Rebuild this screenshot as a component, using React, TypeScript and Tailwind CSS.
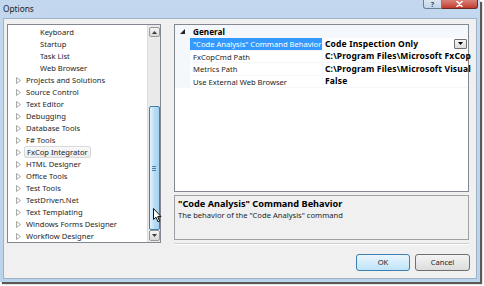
import React from 'react';

const treeItems: { label: string; child?: boolean; selected?: boolean }[] = [
  { label: 'Keyboard', child: true },
  { label: 'Startup', child: true },
  { label: 'Task List', child: true },
  { label: 'Web Browser', child: true },
  { label: 'Projects and Solutions' },
  { label: 'Source Control' },
  { label: 'Text Editor' },
  { label: 'Debugging' },
  { label: 'Database Tools' },
  { label: 'F# Tools' },
  { label: 'FxCop Integrator', selected: true },
  { label: 'HTML Designer' },
  { label: 'Office Tools' },
  { label: 'Test Tools' },
  { label: 'TestDriven.Net' },
  { label: 'Text Templating' },
  { label: 'Windows Forms Designer' },
  { label: 'Workflow Designer' },
];

const properties = [
  { name: '"Code Analysis" Command Behavior', value: 'Code Inspection Only', selected: true },
  { name: 'FxCopCmd Path', value: 'C:\\Program Files\\Microsoft FxCop' },
  { name: 'Metrics Path', value: 'C:\\Program Files\\Microsoft Visual' },
  { name: 'Use External Web Browser', value: 'False' },
];

function ExpandArrow() {
  return (
    <svg width="5" height="7" viewBox="0 0 5 7" className="shrink-0">
      <path d="M0.5 0.5 L4.5 3.5 L0.5 6.5 Z" fill="white" stroke="#a6a6a6" strokeWidth="1" />
    </svg>
  );
}

function TreePanel() {
  return (
    <div className="w-[154px] h-[219px] border border-[#828790] bg-white flex relative">
      <div className="flex-1 pt-[1px] overflow-hidden">
        {treeItems.map((item) => (
          <div key={item.label} className="h-[12px] flex items-center">
            {item.child ? (
              <div className="w-[32px] shrink-0" />
            ) : (
              <div className="w-[18px] shrink-0 flex justify-end pr-[5px] pl-[8px]">
                <ExpandArrow />
              </div>
            )}
            <span
              className={
                item.selected
                  ? 'px-[2px] -ml-[2px] h-[12px] leading-[11px] border border-[#d9d9d9] rounded-[2px] bg-gradient-to-b from-[#fafafa] to-[#ebebeb] text-[#1e1e1e]'
                  : 'text-[#1e1e1e] leading-[12px]'
              }
            >
              {item.label}
            </span>
          </div>
        ))}
      </div>
      {/* vertical scrollbar */}
      <div className="w-[13px] bg-[#eaeaea] border-l border-[#dcdcdc] flex flex-col items-center pt-[2px] pb-[1px]">
        <div className="w-[11px] h-[10px] border border-[#9a9a9a] rounded-[2px] bg-gradient-to-b from-[#f5f5f5] to-[#d8d8d8] flex items-center justify-center">
          <svg width="5" height="3" viewBox="0 0 5 3">
            <path d="M0 3 L2.5 0 L5 3 Z" fill="#3a3a3a" />
          </svg>
        </div>
        <div className="flex-1" />
        <div className="w-[11px] h-[124px] border border-[#3c7fb1] rounded-[2px] bg-gradient-to-r from-[#e3f3fd] via-[#b7dcf5] to-[#a5d2f1] flex items-center justify-center">
          <div className="flex flex-col gap-[1px]">
            <div className="w-[4px] h-px bg-[#4a7fa8]" />
            <div className="w-[4px] h-px bg-[#4a7fa8]" />
            <div className="w-[4px] h-px bg-[#4a7fa8]" />
          </div>
        </div>
        <div className="w-[11px] h-[11px] border border-[#9a9a9a] rounded-[2px] bg-gradient-to-b from-[#f5f5f5] to-[#d8d8d8] flex items-center justify-center">
          <svg width="5" height="3" viewBox="0 0 5 3">
            <path d="M0 0 L2.5 3 L5 0 Z" fill="#3a3a3a" />
          </svg>
        </div>
      </div>
      {/* mouse pointer */}
      <svg className="absolute left-[145px] top-[183px]" width="9" height="15" viewBox="0 0 9 15">
        <path d="M0.5 0.5 L0.5 11.5 L3 9.2 L5 13.8 L6.6 13.1 L4.7 8.6 L8 8.6 Z" fill="white" stroke="#111" strokeWidth="1" strokeLinejoin="round" />
      </svg>
    </div>
  );
}

function PropertyGrid() {
  return (
    <div className="h-[168px] border border-[#828790] bg-white flex flex-col">
      <div className="h-[13px] flex bg-[#f4f7fc]">
        <div className="w-[15px] flex items-center justify-center">
          <svg width="5" height="5" viewBox="0 0 5 5">
            <path d="M5 0 L5 5 L0 5 Z" fill="#262626" />
          </svg>
        </div>
        <span className="pl-[3px] font-bold text-[8.2px] leading-[13px] text-black">General</span>
      </div>
      {properties.map((p) => (
        <div key={p.name} className="h-[12.5px] flex border-b border-[#f4f7fc]">
          <div className="w-[15px] bg-[#f4f7fc] shrink-0" />
          <div
            className={`w-[133px] shrink-0 pl-[3px] border-r border-[#f4f7fc] whitespace-nowrap overflow-hidden leading-[12px] ${
              p.selected ? 'bg-[#3399ff] text-white' : 'text-[#1e1e1e]'
            }`}
          >
            {p.name}
          </div>
          <div className="flex-1 min-w-0 pl-[2px] pr-[1px] flex items-center font-bold text-[8.5px] text-black">
            <span className="flex-1 whitespace-nowrap leading-[12px] tracking-[0.15px]">{p.value}</span>
            {p.selected && (
              <div className="w-[13px] h-[10px] border border-[#707070] rounded-[1px] bg-gradient-to-b from-[#f6f6f6] to-[#dcdcdc] flex items-center justify-center">
                <svg width="5" height="3" viewBox="0 0 5 3">
                  <path d="M0 0 L2.5 3 L5 0 Z" fill="#000" />
                </svg>
              </div>
            )}
          </div>
        </div>
      ))}
    </div>
  );
}

export default function App() {
  return (
    <div
      className="w-[484px] h-[286px] bg-white overflow-hidden text-[7.6px]"
      style={{ fontFamily: '"Noto Sans", "Open Sans", sans-serif' }}
    >
      <div className="w-[480px] h-[282px] bg-gradient-to-b from-[#c3d8ef] to-[#bcd3ec] flex flex-col shadow-[2px_2px_1px_rgba(0,0,0,0.65)]">
        {/* title bar */}
        <div className="h-[18px] flex items-start">
          <span className="pl-[3px] pt-[3px] text-[8.3px] text-[#1c1c1c]">Options</span>
          <div className="flex-1" />
          <div className="flex mr-[2px]">
            <div className="w-[19px] h-[9px] border border-t-0 border-[#6d7f94] rounded-bl-[3px] bg-gradient-to-b from-[#dbe6f3] to-[#c3d4e8] flex items-center justify-center text-[7px] leading-none text-[#3b4a5c] font-bold">
              ?
            </div>
            <div className="w-[36px] h-[9px] border border-t-0 border-l-0 border-[#6b2a22] rounded-br-[3px] bg-gradient-to-b from-[#d8817a] to-[#c2392e] flex items-center justify-center">
              <svg width="7" height="6" viewBox="0 0 7 6">
                <path d="M1 0.5 L6 5.5 M6 0.5 L1 5.5" stroke="white" strokeWidth="1.6" strokeLinecap="round" />
              </svg>
            </div>
          </div>
        </div>
        {/* client area */}
        <div className="flex-1 mx-[3px] mb-[3px] bg-[#f0f0f0] border border-[#9db1c8] flex flex-col">
          <div className="flex pl-[3px] pt-[5px] gap-[13px]">
            <TreePanel />
            <div className="w-[295px] flex flex-col">
              <PropertyGrid />
              <div className="mt-[3px] h-[45px] border border-[#a0a0a0] bg-[#f0f0f0] px-[3px] pt-[2px] text-[#1e1e1e]">
                <div className="font-bold text-[9.2px] leading-[12px] text-black">"Code Analysis" Command Behavior</div>
                <div className="leading-[11px]">The behavior of the "Code Analysis" command</div>
              </div>
              <div className="mt-[3px] h-[2px] border-t border-[#d0d0d0] border-b border-b-white" />
            </div>
          </div>
          <div className="flex justify-end gap-[5px] pr-[6px] mt-[9px]">
            <button className="w-[54px] h-[17px] border border-[#3c7fb1] rounded-[3px] bg-gradient-to-b from-[#eaf6fd] to-[#bfe3f8] text-[#1e1e1e] leading-none">
              OK
            </button>
            <button className="w-[55px] h-[17px] border border-[#707070] rounded-[3px] bg-gradient-to-b from-[#f4f4f4] to-[#dcdcdc] text-[#1e1e1e] leading-none">
              Cancel
            </button>
          </div>
        </div>
      </div>
    </div>
  );
}
